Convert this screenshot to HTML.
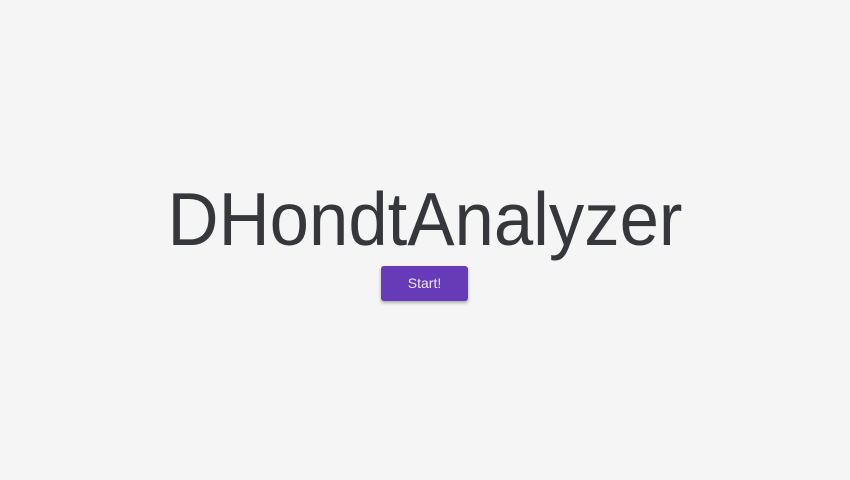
<!DOCTYPE html>
<html><head><meta charset="utf-8"><style>
html,body{margin:0;padding:0;background:#f5f5f5;width:850px;height:480px;overflow:hidden;font-family:"Liberation Sans",sans-serif}
h1{position:absolute;left:0;width:850px;top:176px;margin:0;text-align:center;font-weight:400;font-size:75px;line-height:86px;color:#35373b;transform:scaleX(0.943);transform-origin:425px 0}
.btn{position:absolute;left:381px;top:266px;width:87px;height:35px;background:#673ab7;border-radius:3px;color:#eee6f6;font-size:14px;line-height:35px;text-align:center;box-shadow:0 2px 3px rgba(0,0,0,.3)}
</style></head><body>
<h1>DHondtAnalyzer</h1>
<div class="btn">Start!</div>
</body></html>
